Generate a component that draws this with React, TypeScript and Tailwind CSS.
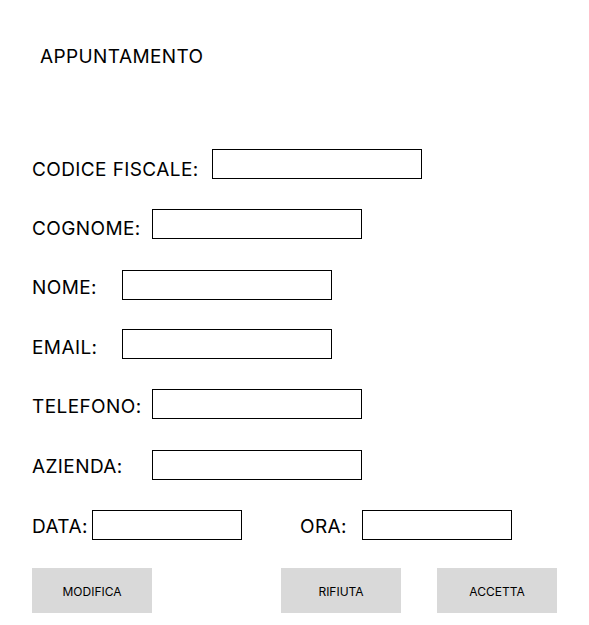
const rows = [
  { label: 'CODICE FISCALE:', labelW: 'w-[180px]', mt: 'mt-[81px]', lt: 'pt-[10px]' },
  { label: 'COGNOME:', labelW: 'w-[120px]', mt: 'mt-[30px]', lt: 'pt-[9px]' },
  { label: 'NOME:', labelW: 'w-[90px]', mt: 'mt-[31px]', lt: 'pt-[7px]' },
  { label: 'EMAIL:', labelW: 'w-[90px]', mt: 'mt-[29px]', lt: 'pt-[8px]' },
  { label: 'TELEFONO:', labelW: 'w-[120px]', mt: 'mt-[30px]', lt: 'pt-[7px]' },
  { label: 'AZIENDA:', labelW: 'w-[120px]', mt: 'mt-[31px]', lt: 'pt-[6px]' },
]

function Field({ className = 'w-[210px]' }: { className?: string }) {
  return <div className={`h-[30px] border border-black bg-white ${className}`} />
}

function Button({ children }: { children: string }) {
  return (
    <button className="w-[120px] h-[45px] pt-[3px] bg-[#d9d9d9] text-[12px] tracking-normal text-black flex items-center justify-center">
      {children}
    </button>
  )
}

export default function App() {
  return (
    <div className="w-[589px] h-[625px] bg-white text-black font-['Inter','Liberation_Sans',sans-serif] text-[19px] leading-[22px] tracking-[0.4px]">
      <div className="pt-[46px] pl-[40px]">APPUNTAMENTO</div>

      <div className="pl-[32px]">
        {rows.map((r) => (
          <div key={r.label} className={`flex items-start h-[30px] ${r.mt}`}>
            <span className={`${r.labelW} ${r.lt} shrink-0`}>{r.label}</span>
            <Field />
          </div>
        ))}

        <div className="flex items-start h-[30px] mt-[30px]">
          <span className="w-[60px] pt-[6px] shrink-0">DATA:</span>
          <Field className="w-[150px]" />
          <span className="w-[62px] ml-[58px] pt-[6px] shrink-0">ORA:</span>
          <Field className="w-[150px]" />
        </div>

        <div className="flex mt-[28px]">
          <Button>MODIFICA</Button>
          <div className="ml-[129px]">
            <Button>RIFIUTA</Button>
          </div>
          <div className="ml-[36px]">
            <Button>ACCETTA</Button>
          </div>
        </div>
      </div>
    </div>
  )
}
